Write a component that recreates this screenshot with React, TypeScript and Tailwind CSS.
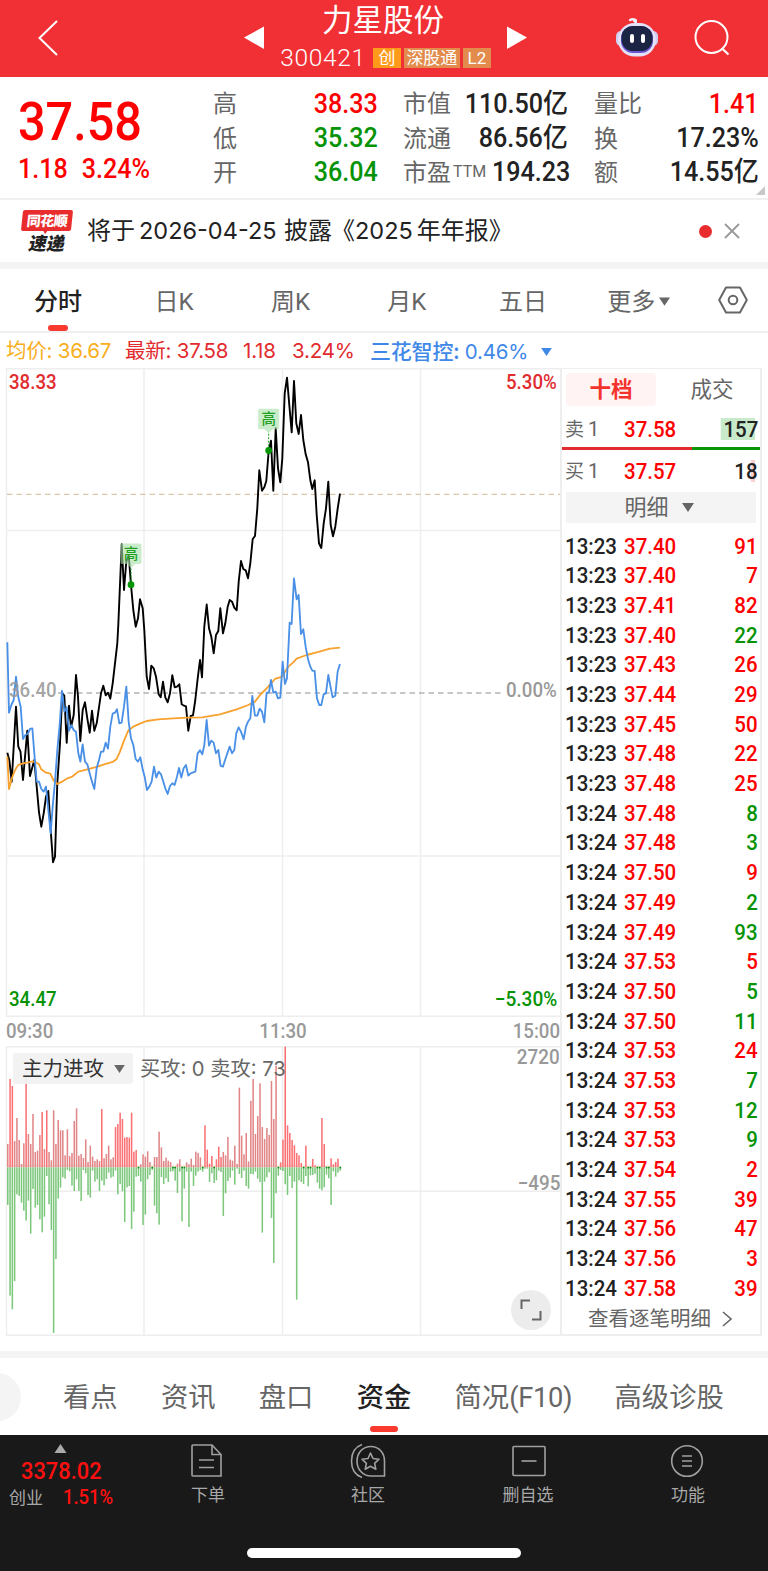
import React from "react";
import clsx from "clsx";

const PRICE_LINE =
  "7.3,752.7 9.3,760 11.7,781.7 16,706.7 18.3,746.7 20.5,751.7 23,780 27.3,730.7 30,776 34.3,760 36.7,786.7 39,812.3 41.3,826.7 43.7,813.3 46,796.7 48.3,791 50.7,830 53,862.3 55,856.7 57.3,783.3 60,743.3 62.3,693.3 64.3,695.7 66.7,742.7 69,705.7 71,727.3 73.7,715 76,675 78,696.7 80.3,741 82.7,710 85,702.3 87.3,718.3 89.7,732.7 92,710.7 94.3,730.7 96.7,723.3 101,693.3 103.3,685.7 105.7,695.3 108,692.7 110.3,698.7 112.7,683.3 117.3,643.3 118.3,625 121.7,544.3 124,590 126.3,561.7 128.7,555 131,585 133.3,610 135.7,626.7 138,618.3 140,599.3 142.7,608.3 144.3,630 146.7,676.7 149,689 151.3,665.7 153.7,668.3 156,676.7 158.7,694.3 160.7,697.3 163,681.7 165.3,697.3 167.7,702.3 170,693.3 172.3,675.3 174.7,687.3 177,686.7 179.3,684.3 181.7,704.3 184,705.7 186,706.3 188.3,730.7 190.7,716 193,715.3 195.3,700 197.7,678.3 200,660 202,677.3 204.3,626.7 206.7,604.5 209,628.3 211.3,636.7 213.7,653.3 216,635 218.3,631 220.3,608.3 223,633.3 225.3,623.3 227.7,606.7 229.7,600 232,601.7 234.3,607.7 236.7,610.3 238.7,581.7 241,561 243.3,569 245.7,570.3 248,578.3 250.3,563.3 252.7,539 255,536 257.3,508.3 259.3,470.3 262,490.7 264.3,487.3 266.3,481 268.7,450.7 271,440.7 273.3,490.7 275.7,428.3 278,468.3 280.3,482.3 282.3,458.3 284.7,393.3 287,377.7 289.3,405 291.7,432.3 294,381 296.3,423.3 298.7,434 301,415 303.3,440 305.7,454.3 308,462.3 310.3,480 312.3,489 314.7,480.3 316.7,515 319,543.3 321.3,548 323.7,523.3 326,508.3 328.3,481.7 330.7,525 333,536.3 335.3,526.7 337.7,508.3 340,493.7";

// compared stock and average price, plotted at three units per pixel
const COMPARE_LINE =
  "22,97 27,308 34,285 41,270 48,200 55,262 62,290 69,387 76,375 83,372 90,357 97,355 103,430 110,515 117,515 124,537 131,545 138,530 145,600 152,670 158,590 165,515 172,420 179,345 186,242 193,305 200,292 207,362 214,345 221,360 228,365 235,430 241,455 248,403 255,455 262,463 269,490 276,515 283,537 290,475 297,450 303,425 310,425 317,398 324,416 331,350 338,311 345,308 351,298 358,340 365,338 372,290 379,230 386,335 393,385 400,405 407,447 414,455 421,442 428,478 434,500 441,540 448,530 455,515 462,470 469,503 476,485 483,493 489,512 496,535 503,552 510,528 517,520 524,525 531,500 537,474 544,503 551,475 558,465 565,497 572,490 586,485 593,430 600,421 607,433 613,405 620,330 627,407 634,392 641,398 648,430 655,420 662,468 669,470 676,448 689,410 696,430 703,420 709,370 716,352 723,365 731,388 738,350 744,335 751,325 757,258 765,317 772,317 779,296 786,305 793,337 800,248 807,248 813,210 820,248 827,245 834,265 841,263 848,155 855,222 861,205 869,38 875,42 882,-95 890,-32 896,-45 903,72 910,58 917,110 924,147 931,170 937,182 944,183 951,265 958,285 964,285 971,253 978,250 985,195 992,232 998,262 1006,257 1013,185 1020,162";

const AVERAGE_LINE =
  "22,440 27,537 34,510 41,490 48,475 55,465 69,460 83,458 97,454 110,458 117,463 124,478 138,488 151,491 160,510 172,522 186,515 200,506 215,501 235,485 262,478 290,471 310,464 338,456 350,447 360,425 372,392 386,360 400,350 420,341 440,333 475,328 520,325 565,323 607,322 660,313 710,298 745,285 765,275 780,255 800,235 825,207 845,201 865,170 880,157 890,146 920,135 950,127 990,116 1020,113";

// [buy top, sell bottom] per minute, baseline at 502
const BARS = [
  [432, 615], [237, 887], [258, 928], [423, 843], [354, 583], [420, 588], [492, 608], [430, 632], [230, 662], [402, 602],
  [432, 701], [342, 567], [456, 623], [452, 615], [405, 658], [336, 697], [447, 650], [331, 528], [456, 613], [481, 690],
  [331, 999], [432, 777], [360, 596], [391, 563], [391, 532], [466, 536], [388, 510], [468, 514], [459, 557], [363, 573],
  [325, 538], [467, 573], [462, 603], [474, 510], [418, 520], [486, 585], [437, 593], [470, 512], [483, 545], [478, 538],
  [483, 573], [327, 542], [475, 556], [462, 537], [437, 518], [478, 533], [472, 530], [381, 512], [372, 583], [338, 552],
  [357, 574], [413, 666], [411, 562], [413, 558], [338, 687], [455, 635], [450, 530], [502, 528], [493, 545], [463, 675],
  [470, 644], [454, 538], [486, 525], [502, 510], [471, 617], [471, 640], [395, 674], [442, 531], [483, 552], [473, 535],
  [482, 546], [486, 515], [502, 514], [502, 542], [491, 579], [478, 515], [502, 664], [502, 566], [487, 515], [493, 681],
  [476, 515], [495, 558], [455, 527], [459, 515], [472, 510], [502, 515], [376, 506], [449, 506], [491, 546], [468, 520],
  [502, 549], [478, 541], [440, 512], [471, 516], [456, 648], [466, 580], [411, 543], [479, 533], [482, 512], [437, 554],
  [492, 506], [263, 522], [407, 534], [463, 512], [399, 558], [484, 566], [302, 522], [237, 523], [402, 515], [348, 536],
  [250, 546], [381, 698], [417, 545], [384, 532], [405, 517], [243, 654], [357, 789], [197, 580], [502, 527], [487, 510],
  [419, 513], [140, 553], [376, 585], [399, 528], [420, 564], [436, 545], [459, 899], [466, 541], [489, 546], [502, 552],
  [437, 528], [502, 559], [502, 526], [477, 525], [496, 521], [502, 548], [502, 566], [354, 571], [432, 562], [502, 524],
  [502, 535], [475, 615], [493, 514], [486, 530], [476, 518], [502, 512],
];

const TICKS: [string, string, number, boolean][] = [
  ["13:23", "37.40", 91, true],
  ["13:23", "37.40", 7, true],
  ["13:23", "37.41", 82, true],
  ["13:23", "37.40", 22, false],
  ["13:23", "37.43", 26, true],
  ["13:23", "37.44", 29, true],
  ["13:23", "37.45", 50, true],
  ["13:23", "37.48", 22, true],
  ["13:23", "37.48", 25, true],
  ["13:24", "37.48", 8, false],
  ["13:24", "37.48", 3, false],
  ["13:24", "37.50", 9, true],
  ["13:24", "37.49", 2, false],
  ["13:24", "37.49", 93, false],
  ["13:24", "37.53", 5, true],
  ["13:24", "37.50", 5, false],
  ["13:24", "37.50", 11, false],
  ["13:24", "37.53", 24, true],
  ["13:24", "37.53", 7, false],
  ["13:24", "37.53", 12, false],
  ["13:24", "37.53", 9, false],
  ["13:24", "37.54", 2, true],
  ["13:24", "37.55", 39, true],
  ["13:24", "37.56", 47, true],
  ["13:24", "37.56", 3, true],
  ["13:24", "37.58", 39, true],
];

const Triangle = ({ className }: { className?: string }) => (
  <svg viewBox="0 0 12 9" className={clsx("shrink-0", className)}>
    <path d="M0 0h12L6 9z" fill="currentColor" />
  </svg>
);

const RobotIcon = () => (
  <svg width="44" height="42" viewBox="0 0 44 42" className="shrink-0">
    <path d="M21 8C21 4 18.500 2 15 4" fill="none" stroke="#f4f1ff" strokeWidth="2.4" strokeLinecap="round" />
    <circle cx="20" cy="4.400" r="2" fill="#f4f1ff" />
    <rect x="1" y="15" width="42" height="15" rx="5" fill="#cfcdf0" />
    <rect x="3" y="7" width="38" height="33.500" rx="16.500" fill="#e3e1f8" />
    <rect x="6" y="10" width="32" height="27" rx="12" fill="#6a55cf" />
    <rect x="6.500" y="10" width="31" height="25" rx="11.500" fill="#1c2444" />
    <rect x="15" y="18" width="4" height="9" rx="2" fill="#fff" />
    <rect x="26" y="18" width="4" height="9" rx="2" fill="#fff" />
  </svg>
);

const Header = () => (
  <header className="flex h-[77px] w-full items-start bg-[#f13035] text-white">
    <svg width="244" height="77" viewBox="0 0 244 77" className="shrink-0">
      <path d="M57 21L39.500 38L57 55" fill="none" stroke="#fff" strokeWidth="2" />
    </svg>
    <svg width="20" height="77" viewBox="0 0 20 77" className="shrink-0">
      <path d="M20 26.500V49L0 37.500z" fill="#fff" />
    </svg>
    <div className="flex w-[243px] flex-col items-center">
      <div className="mr-[5px] mt-1 flex h-[34px] items-center text-[30.5px] leading-none">力星股份</div>
      <div className="mt-[8px] flex h-[24px] items-center gap-[3px] whitespace-nowrap text-[17px] leading-none">
        <span className="mr-[4px] text-[24.5px] font-light tracking-[0.7px]">300421</span>
        <span className="flex h-5 w-[28px] items-center justify-center bg-[#ff9b1a]">创</span>
        <span className="flex h-5 w-[56px] items-center justify-center bg-[#e28b4c]">深股通</span>
        <span className="flex h-5 w-[28px] items-center justify-center bg-[#e28b4c]">L2</span>
      </div>
    </div>
    <svg width="20" height="77" viewBox="0 0 20 77" className="shrink-0">
      <path d="M0 26.500V49L20 37.500z" fill="#fff" />
    </svg>
    <div className="ml-[88px] mt-[16px]">
      <RobotIcon />
    </div>
    <svg width="40" height="77" viewBox="0 0 40 77" className="ml-[33px] shrink-0">
      <circle cx="19.500" cy="37" r="16" fill="none" stroke="#fff" strokeWidth="2" />
      <path d="M30 48.500L36.500 54.500" stroke="#fff" strokeWidth="2.200" />
    </svg>
  </header>
);

type Item = { label: React.ReactNode; value: React.ReactNode; color: string };

const StatColumn = ({ items, className }: { items: Item[]; className: string }) => (
  <div className={clsx("flex flex-col", className)}>
    {items.map((item, i) => (
      <div key={i} className="flex h-[34.4px] items-center justify-between leading-none">
        <span className="whitespace-nowrap text-[24px] text-[#666]">{item.label}</span>
        <span className={clsx("origin-right scale-x-[0.93] whitespace-nowrap text-[27px] font-medium", item.color)}>
          {item.value}
        </span>
      </div>
    ))}
  </div>
);

const Quote = () => (
  <section className="relative flex h-[123px] shrink-0 border-b-2 border-[#f0f0f0] bg-white pt-[10px]">
    <div className="ml-[18px] w-[195px] shrink-0 font-medium text-[#fe0000]">
      <div className="mt-[8px] flex h-[54px] origin-left scale-x-[0.9] items-center text-[54px] leading-none">37.58</div>
      <div className="mt-[5px] flex h-[30px] origin-left scale-x-[0.93] items-center gap-[15px] whitespace-nowrap text-[27px] leading-none">
        <span>1.18</span>
        <span>3.24%</span>
      </div>
    </div>
    <StatColumn
      className="w-[165px]"
      items={[
        { label: "高", value: "38.33", color: "text-[#fe0000]" },
        { label: "低", value: "35.32", color: "text-[#069306]" },
        { label: "开", value: "36.04", color: "text-[#069306]" },
      ]}
    />
    <StatColumn
      className="ml-[25px] w-[165px]"
      items={[
        { label: "市值", value: "110.50亿", color: "text-[#222]" },
        { label: "流通", value: "86.56亿", color: "text-[#222]" },
        {
          label: (
            <>
              市盈<span className="relative -top-1 ml-[2px] text-[16px]">TTM</span>
            </>
          ),
          value: "194.23",
          color: "text-[#222]",
        },
      ]}
    />
    <StatColumn
      className="ml-[26px] w-[165px]"
      items={[
        { label: "量比", value: "1.41", color: "text-[#fe0000]" },
        { label: "换", value: "17.23%", color: "text-[#222]" },
        { label: "额", value: "14.55亿", color: "text-[#222]" },
      ]}
    />
    <svg width="9" height="9" viewBox="0 0 9 9" className="absolute bottom-[3px] right-[3px]">
      <path d="M9 0V9H0z" fill="#c8c8c8" />
    </svg>
  </section>
);

const News = () => (
  <section className="flex h-[62px] items-center bg-white text-[#222]">
    <div className="ml-[21px] flex w-[52px] flex-col items-center leading-none">
      <div className="relative flex h-[21px] w-[50px] -skew-x-6 items-center justify-center rounded-[2px] bg-[#e92d2f] text-[14px] font-black tracking-[-0.5px] text-white">
        同花顺
        <Triangle className="absolute left-[20px] top-[20px] h-[4px] w-[9px] text-[#e92d2f]" />
      </div>
      <div className="mt-[4px] -skew-x-12 text-[18px] font-black">速递</div>
    </div>
    <div className="ml-[14px] flex items-center whitespace-nowrap font-['Inter','Noto_Sans_CJK_SC',sans-serif] text-[24px] leading-none">
      将于<span className="mx-1 w-[141px] text-[23.5px]">2026-04-25</span>披露
      <span className="-ml-[1px]">《</span>
      <span className="mr-1 text-[23.5px]">2025</span>年年报<span>》</span>
    </div>
    <span className="ml-auto h-[13px] w-[13px] rounded-full bg-[#e92d2f]" />
    <svg width="16" height="16" viewBox="0 0 16 16" className="ml-[12px] mr-[28px]">
      <path d="M1 1L15 15M15 1L1 15" stroke="#999" strokeWidth="1.800" />
    </svg>
  </section>
);

const PeriodTabs = () => (
  <nav className="flex h-[64px] items-center border-b-2 border-[#f0f0f0] bg-white text-[24px] leading-none text-[#666]">
    <div className="relative flex h-full w-[116px] items-center justify-center pt-[3px] font-medium text-[#222]">
      分时
      <span className="absolute bottom-0 left-[48px] h-[6px] w-[20px] rounded-[3px] bg-[#fb3a2f]" />
    </div>
    {["日K", "周K", "月K", "五日"].map((t) => (
      <div key={t} className="flex w-[116.3px] justify-center pt-[3px]">
        {t}
      </div>
    ))}
    <div className="ml-[26px] flex w-[110.6px] items-center gap-[4px] pt-[3px]">
      更多
      <Triangle className="h-[9px] w-[11px]" />
    </div>
    <svg width="30" height="28" viewBox="0 0 30 28">
      <path d="M8 1.500H22L28.800 14L22 26.500H8L1.200 14z" fill="none" stroke="#666" strokeWidth="2" strokeLinejoin="round" />
      <circle cx="15" cy="14" r="4.300" fill="none" stroke="#666" strokeWidth="2" />
    </svg>
  </nav>
);

const Legend = () => (
  <div className="flex h-[35px] items-center whitespace-nowrap bg-white pl-[6px] pt-[2px] font-['Inter','Noto_Sans_CJK_SC',sans-serif] text-[20.5px] leading-none tracking-[-0.2px]">
    <span className="w-[119px] text-[#f9ae1c]">均价: 36.67</span>
    <span className="w-[118px] text-[#e22b2f]">最新: 37.58</span>
    <span className="w-[49px] text-[#e22b2f]">1.18</span>
    <span className="w-[78px] text-[#e22b2f]">3.24%</span>
    <span className="w-[171px] text-[#3f88e8]">
      <span className="font-['Noto_Sans_CJK_SC',sans-serif] text-[21px] font-medium">三花智控:</span> 0.46%
    </span>
    <Triangle className="h-[8px] w-[11px] text-[#3f88e8]" />
  </div>
);

const HighMarker = ({ x, y, dot }: { x: number; y: number; dot: number }) => (
  <g>
    <path
      d={`M${x - 9} ${y}h18q1.500 0 1.500 1.500v17.500q0 1.500 -1.500 1.500h-5l-4 4l-4 -4h-5q-1.500 0 -1.500 -1.500v-17.500q0 -1.500 1.500 -1.500z`}
      fill="#a6dfa8"
      fillOpacity="0.6"
    />
    <text x={x} y={y + 15} textAnchor="middle" fontSize="14.500" fontWeight="500" fill="#1fa01f">
      高
    </text>
    <path d={`M${x} ${y + 25}V${dot}`} stroke="#12a012" strokeWidth="1" strokeDasharray="2 1.500" />
    <circle cx={x} cy={dot} r="3.400" fill="#079607" />
  </g>
);

const PriceChart = () => (
  <div className="relative h-[649px] text-[20.5px] font-medium leading-none">
    <svg width="562" height="649" viewBox="0 368 562 649" className="block">
      <g stroke="#eeeeee" strokeWidth="1.500" fill="none">
        <path d="M6 368.700H562M6 530.500H560M6 856H560M6.500 368V1017M144 368V1017M282.500 368V1017M420.500 368V1017" />
        <path d="M6 1016.500H560" strokeWidth="1.800" />
      </g>
      <path d="M7 494.300H560" stroke="#d2b894" strokeWidth="1" strokeDasharray="5.500 4" />
      <path d="M58 693H504" stroke="#8d8d8d" strokeWidth="1.200" strokeDasharray="5.500 4" />
      <polyline points={PRICE_LINE} fill="none" stroke="#000" strokeWidth="1.900" strokeLinejoin="round" />
      <g transform="translate(0 610) scale(0.3333)" fill="none" strokeWidth="5.500" strokeLinejoin="round">
        <polyline points={AVERAGE_LINE} stroke="#f9a12e" />
        <polyline points={COMPARE_LINE} stroke="#4990e6" />
      </g>
      <HighMarker x={131} y={543.5} dot={584.7} />
      <HighMarker x={268.7} y={408.7} dot={450.5} />
    </svg>
    <span className="absolute left-[9px] top-[4px] origin-left scale-x-[0.91] text-[#e22b2f]">38.33</span>
    <span className="absolute right-[3px] top-[4px] origin-right scale-x-[0.91] text-[#e22b2f]">5.30%</span>
    <span className="absolute left-[9px] top-[312px] origin-left scale-x-[0.91] text-[#999]/90">36.40</span>
    <span className="absolute right-[3px] top-[312px] origin-right scale-x-[0.91] text-[#999]">0.00%</span>
    <span className="absolute bottom-[8px] left-[9px] origin-left scale-x-[0.91] text-[#069306]">34.47</span>
    <span className="absolute bottom-[8px] right-[3px] origin-right scale-x-[0.93] text-[#069306]">−5.30%</span>
  </div>
);

const AttackChart = () => (
  <div className="relative h-[290px] leading-none">
    <svg width="562" height="290" viewBox="0 0 562 290" className="block">
      <g stroke="#eeeeee" strokeWidth="1.500" fill="none">
        <path d="M6 0.700H560M6 145.300H560M6.500 0V290M144 0V290M282.500 0V290M420.500 0V290" />
        <path d="M6 289.300H560" strokeWidth="1.800" />
      </g>
      <g transform="translate(0 -46) scale(0.3333)">
        <rect x="20" y="494" width="998" height="8" fill="#f7c9c4" opacity="0.35" />
        {BARS.map(([top, bottom], i) => {
          const x = 21 + i * 6.88;
          const bright = [1, 2, 8, 15, 17, 41].includes(i) || (i > 46 && i < 57) || (i > 85 && i < 94) || i > 118;
          return (
            <g key={i}>
              <rect x={x} y={top} width="4.600" height={502 - top} fill={bright ? "#fa7073" : "#e18587"} />
              <rect x={x} y={502} width="4.600" height={bottom - 502} fill="#7cc77c" />
              {top === 502 && <rect x={x} y={500} width="5" height="5" fill="#0b8a0b" />}
            </g>
          );
        })}
      </g>
    </svg>
    <div className="absolute left-[13px] top-[7px] flex h-[31px] w-[120px] items-center gap-[10px] rounded-[3px] bg-[#f1f1f1]/95 pl-[9px] text-[20.5px] text-[#333]">
      <span className="pt-[2px]">主力进攻</span>
      <Triangle className="h-[8px] w-[11px] text-[#666]" />
    </div>
    <span className="absolute left-[140px] top-[13px] whitespace-pre font-['Inter','Noto_Sans_CJK_SC',sans-serif] text-[20.2px] text-[#666]">
      买攻: 0 卖攻: 73
    </span>
    <div className="absolute right-0 top-px origin-right scale-x-[0.92] text-[20.5px] font-medium text-[#999]">2720</div>
    <div className="absolute right-0 top-[127px] origin-right scale-x-[0.92] text-[20.5px] font-medium text-[#999]">−495</div>
    <div className="absolute bottom-[6px] right-[9px] flex h-10 w-10 items-center justify-center rounded-full bg-[#ececec]">
      <svg width="22" height="22" viewBox="0 0 22 22">
        <path d="M1.500 10V1.500H10M20.500 12V20.500H12" fill="none" stroke="#666" strokeWidth="2" />
      </svg>
    </div>
  </div>
);

const OrderBook = () => (
  <aside className="flex w-[200px] flex-col border-r-2 border-t border-b-2 border-[#eeeeee] text-[22.5px] leading-none">
    <div className="ml-1 mt-1 flex h-[33px] text-[21.5px] text-[#666]">
      <div className="flex w-[90px] shrink-0 items-center justify-center rounded-[4px] bg-[#fff3f3] pt-px font-bold text-[#f5332d]">
        十档
      </div>
      <div className="flex w-[112px] shrink-0 items-center justify-center pt-px">成交</div>
    </div>
    <div className="mt-[7px] flex h-[32px] items-center pl-[3px] pr-[2px]">
      <span className="w-[59px] text-[19px] text-[#666]">
        卖<span className="ml-1 text-[20px]">1</span>
      </span>
      <span className="origin-left scale-x-[0.91] font-medium text-[#fe0000]">37.58</span>
      <span className="ml-auto origin-right scale-x-[0.91] bg-linear-to-l from-transparent from-[3px] to-[#c9e9cb] to-[3px] pl-[3px] font-medium text-[#222]">
        157
      </span>
    </div>
    <div className="mt-[2px] flex h-[3px]">
      <span className="w-[130px] bg-[#e22b2f]" />
      <span className="flex-1 bg-[#079607]" />
    </div>
    <div className="mt-[5px] flex h-[32px] items-center pl-[3px] pr-[2px]">
      <span className="w-[59px] text-[19px] text-[#666]">
        买<span className="ml-1 text-[20px]">1</span>
      </span>
      <span className="origin-left scale-x-[0.91] font-medium text-[#fe0000]">37.57</span>
      <span className="ml-auto flex origin-right scale-x-[0.91] font-medium text-[#222]">
        1<span className="bg-[linear-gradient(90deg,transparent_5px,#fbd0d0_5px,#fbd0d0_10px,transparent_10px)]">8</span>
      </span>
    </div>
    <div className="ml-1 mt-[5px] flex h-[31px] w-[190px] items-center justify-center gap-[13px] bg-[#f4f4f4] pr-1 text-[22px] text-[#666]">
      <span className="pt-px">明细</span>
      <Triangle className="h-[9px] w-[12px]" />
    </div>
    <div className="mt-[8px]">
      {TICKS.map(([time, price, qty, up], i) => (
        <div key={i} className="flex h-[29.7px] items-center pl-[3px] pr-[2px] font-medium">
          <span className="w-[59px] origin-left scale-x-[0.91] text-[#222]">{time}</span>
          <span className="origin-left scale-x-[0.91] text-[#fe0000]">{price}</span>
          <span className={clsx("ml-auto origin-right scale-x-[0.91]", up ? "text-[#fe0000]" : "text-[#069306]")}>{qty}</span>
        </div>
      ))}
    </div>
    <div className="flex flex-1 items-center gap-[11px] pl-[26px] pt-[2px] text-[20.5px] text-[#666]">
      查看逐笔明细
      <svg width="10" height="16" viewBox="0 0 10 16">
        <path d="M1 1L9 8L1 15" fill="none" stroke="#666" strokeWidth="1.600" />
      </svg>
    </div>
  </aside>
);

const SectionTabs = () => (
  <nav className="flex h-[77px] items-center overflow-hidden bg-white text-[27.3px] leading-none text-[#666]">
    <span className="-ml-[27px] mr-[42px] h-12 w-12 shrink-0 rounded-full bg-[#f4f4f4]" />
    <div className="flex items-center gap-[43.3px] whitespace-nowrap pt-[4px]">
      <span>看点</span>
      <span>资讯</span>
      <span>盘口</span>
      <span className="relative font-medium text-[#222]">
        资金
        <span className="absolute -bottom-[20px] left-[13px] h-[6px] w-[28px] rounded-[3px] bg-[#fb3a2f]" />
      </span>
      <span>
        简况<span className="inline-block tracking-[-0.3px]">(F10)</span>
      </span>
      <span className="-ml-[1px]">高级诊股</span>
    </div>
  </nav>
);

const ACTIONS = [
  {
    label: "下单",
    icon: (
      <>
        <path d="M3 2H22L31 11.500V33H3Q2 33 2 32V3Q2 2 3 2z" />
        <path d="M22 2V11.500H31M9 17H24M9 24.500H24" />
      </>
    ),
  },
  {
    label: "社区",
    icon: (
      <>
        <path d="M21 3.500C29 3.500 34.500 10 34.500 18V33H21C12.500 33 7 26 7 18.300C7 10 12.500 3.500 21 3.500z" />
        <path d="M12 1.500C5 4 1.500 10.500 1.500 18C1.500 25.500 5 32 12 34.500" />
        <path d="M20.500 10L23 15.500L29 16.200L24.600 20.300L25.800 26.200L20.500 23.200L15.200 26.200L16.400 20.300L12 16.200L18 15.500z" strokeLinejoin="round" />
      </>
    ),
  },
  {
    label: "删自选",
    icon: (
      <>
        <rect x="3" y="3.500" width="32" height="29" rx="1" />
        <path d="M11.500 18H26.500" />
      </>
    ),
  },
  {
    label: "功能",
    icon: (
      <>
        <circle cx="17" cy="18" r="15.300" />
        <path d="M12 13H22M12 18H22M12 23H22" />
      </>
    ),
  },
];

const BottomBar = () => (
  <footer className="flex h-[136px] flex-col bg-[#191919] text-[#a8a8a8]">
    <div className="flex h-[113px] leading-none">
      <div className="flex w-[128px] flex-col">
        <Triangle className="ml-[53px] mt-[9px] h-[9px] w-[15px] rotate-180 text-[#aaa]" />
        <span className="ml-[21px] mt-[6px] origin-left scale-x-[0.91] text-[24px] font-medium text-[#fe1010]">3378.02</span>
        <div className="mt-[4px] flex items-center pl-[9px] text-[17px]">
          <span className="w-[54px] pt-[2px]">创业</span>
          <span className="origin-left scale-x-[0.9] text-[20.5px] font-medium text-[#fe1010]">1.51%</span>
        </div>
      </div>
      {ACTIONS.map(({ label, icon }) => (
        <div key={label} className="flex w-[160px] flex-col items-center">
          <svg width="36" height="36" viewBox="0 0 36 36" fill="none" stroke="#a0a0a0" strokeWidth="1.600" className="mt-[8px]">
            {icon}
          </svg>
          <span className="mt-[8px] text-[17px]">{label}</span>
        </div>
      ))}
    </div>
    <span className="mx-auto h-[10px] w-[274px] rounded-full bg-white" />
  </footer>
);

const App = (): React.JSX.Element => {
  return (
    <main className="flex h-[1571px] w-[768px] flex-col overflow-hidden bg-white font-['Roboto','Noto_Sans_CJK_SC',sans-serif]">
      <Header />
      <Quote />
      <News />
      <div className="h-[7px] bg-[#f4f4f4]" />
      <PeriodTabs />
      <Legend />
      <div className="flex h-[968px]">
        <div className="flex w-[562px] flex-col border-r-2 border-[#eeeeee]">
          <PriceChart />
          <div className="flex h-[29px] items-center justify-between pl-[6px] text-[20.5px] font-medium leading-none text-[#999]">
            <span className="origin-left scale-x-[0.91]">09:30</span>
            <span className="scale-x-[0.91]">11:30</span>
            <span className="origin-right scale-x-[0.91]">15:00</span>
          </div>
          <AttackChart />
        </div>
        <OrderBook />
      </div>
      <div className="mt-[15px] h-[7px] shrink-0 bg-[#f4f4f4]" />
      <SectionTabs />
      <BottomBar />
    </main>
  );
};

export default App;
